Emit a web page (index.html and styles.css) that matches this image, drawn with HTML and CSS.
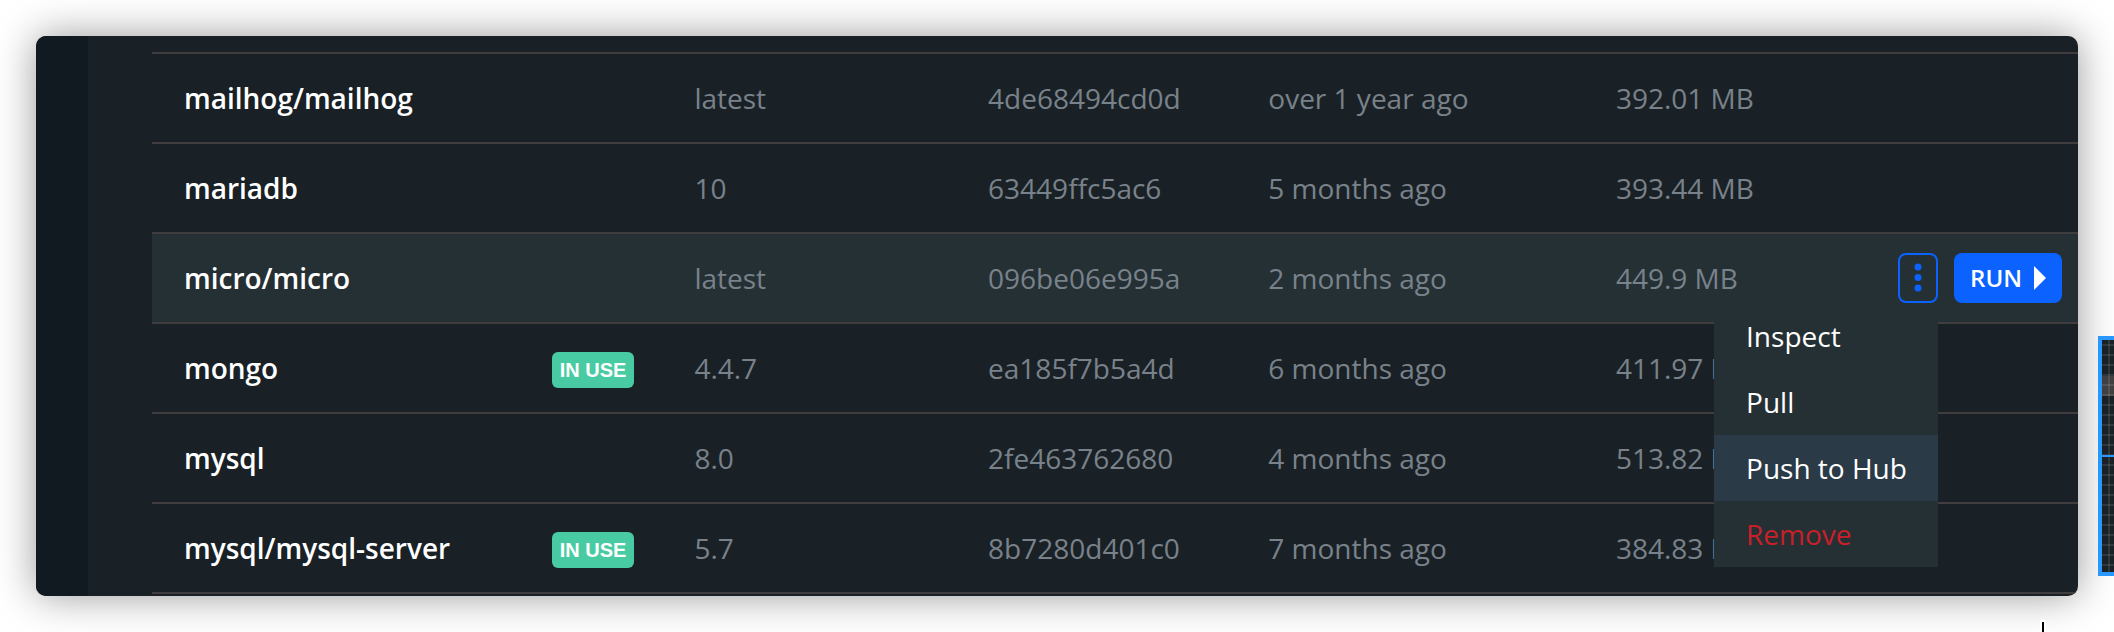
FILE: index.html
```html
<!DOCTYPE html>
<html lang="en">
<head>
<meta charset="utf-8">
<title>Images</title>
<link rel="stylesheet" href="styles.css">
</head>
<body>
<main class="window">
  <div class="sidebar"></div>
  <div class="content">
    <table class="images">
      <colgroup>
        <col class="col-name"><col class="col-tag"><col class="col-id"><col class="col-created"><col class="col-size">
      </colgroup>
      <tbody>
        <tr><td><div class="name">mailhog/mailhog</div></td><td>latest</td><td>4de68494cd0d</td><td>over 1 year ago</td><td>392.01 MB</td></tr>
        <tr><td><div class="name">mariadb</div></td><td>10</td><td>63449ffc5ac6</td><td>5 months ago</td><td>393.44 MB</td></tr>
        <tr class="active"><td><div class="name">micro/micro</div></td><td>latest</td><td>096be06e995a</td><td>2 months ago</td>
          <td>
            <div class="size">449.9 MB
              <div class="actions">
                <div class="more">
                  <button class="more-button" type="button" aria-label="More actions" aria-expanded="true">
                    <svg width="8" height="30" viewBox="0 0 8 30" aria-hidden="true"><circle cx="4" cy="4" r="3.5"/><circle cx="4" cy="14.500" r="3.5"/><circle cx="4" cy="25" r="3.5"/></svg>
                  </button>
                  <div class="menu">
                    <button class="item" type="button">Inspect</button>
                    <button class="item" type="button">Pull</button>
                    <button class="item selected" type="button">Push to Hub</button>
                    <button class="item danger" type="button">Remove</button>
                  </div>
                </div>
                <button class="run" type="button">RUN
                  <svg width="12" height="24" viewBox="0 0 12 24" aria-hidden="true"><path d="M0 0L12 12L0 24Z"/></svg>
                </button>
              </div>
            </div>
          </td></tr>
        <tr><td><div class="name">mongo<span class="badge">IN USE</span></div></td><td>4.4.7</td><td>ea185f7b5a4d</td><td>6 months ago</td><td>411.97 MB</td></tr>
        <tr><td><div class="name">mysql</div></td><td>8.0</td><td>2fe463762680</td><td>4 months ago</td><td>513.82 MB</td></tr>
        <tr><td><div class="name">mysql/mysql-server<span class="badge">IN USE</span></div></td><td>5.7</td><td>8b7280d401c0</td><td>7 months ago</td><td>384.83 MB</td></tr>
      </tbody>
    </table>
  </div>
</main>
<div class="magnifier"></div>
<div class="caret"></div>
</body>
</html>
```
FILE: styles.css
```css
* { box-sizing: border-box; }

body {
  margin: 0;
  padding: 36px;
  position: relative;
  min-height: 100vh;
  overflow: hidden;
  background: #fff;
  font-family: "Open Sans", "Noto Sans", sans-serif;
  font-size: 28px;
  line-height: 40px;
}

.window {
  display: flex;
  border-radius: 10px;
  overflow: hidden;
  background: #192126;
  box-shadow: 0 0 40px rgba(0, 0, 0, 0.4);
}

.sidebar { flex: 0 0 52px; background: #111a20; }

.content { flex: 1; padding: 16px 0 2px 64px; }

.images {
  width: 100%;
  table-layout: fixed;
  border-spacing: 0;
  border-top: 2px solid #403d3e;
  color: #79828a;
}

.col-name { width: 26.5%; }
.col-tag { width: 15.25%; }
.col-id { width: 14.55%; }
.col-created { width: 18.05%; }

.images td {
  height: 90px;
  padding: 0 0 0 32px;
  border-bottom: 2px solid #403d3e;
  white-space: nowrap;
}

.active { background: #253035; }

.name {
  display: flex;
  align-items: flex-end;
  justify-content: space-between;
  padding-right: 28px;
  color: #fff;
  font-weight: 600;
}

.badge {
  padding: 0 8px;
  border-radius: 6px;
  background: #48cba2;
  font: bold 20px/36px "Liberation Sans", Arial, sans-serif;
}

.size, .actions {
  display: flex;
  align-items: center;
}

.size { justify-content: space-between; padding-right: 16px; }
.actions { gap: 16px; }
.more { position: relative; }

button { font: inherit; cursor: pointer; }

.more-button {
  display: flex;
  align-items: center;
  justify-content: center;
  width: 40px;
  height: 50px;
  padding: 0;
  border: 2px solid #0b62ff;
  border-radius: 8px;
  background: none;
  fill: #0b62ff;
}

.run {
  display: flex;
  align-items: center;
  gap: 12px;
  height: 50px;
  padding: 0 16px;
  border: 0;
  border-radius: 8px;
  background: #0b62ff;
  color: #fff;
  fill: #fff;
  font-size: 24px;
  font-weight: 600;
}

.menu {
  position: absolute;
  top: 100%;
  right: 0;
  width: 224px;
  background: #253035;
}

.item {
  display: block;
  width: 100%;
  height: 66px;
  padding: 0 32px;
  border: 0;
  background: none;
  color: #fff;
  text-align: left;
}

.selected { background: #2a3a47; }
.danger { color: #c91f28; }

.magnifier {
  position: absolute;
  top: 336px;
  right: 0;
  width: 16px;
  height: 240px;
  border: 4px solid #2897ff;
  border-right: 0;
  background:
    linear-gradient(#2897ff, #2897ff) 0 115px / 100% 2px no-repeat,
    linear-gradient(#ffffff1a, #ffffff1a) 6px 0 / 2px 100% no-repeat,
    repeating-linear-gradient(#0000 0 4px, #ffffff1a 4px 6px, #0000 6px 10px),
    linear-gradient(#413f40, #413f40) 0 36px / 100% 20px no-repeat,
    #192126;
}

.caret {
  position: absolute;
  right: 70px;
  bottom: 0;
  width: 2px;
  height: 10px;
  background: #000;
  box-shadow: 0 0 0 2px #fff;
}
```
